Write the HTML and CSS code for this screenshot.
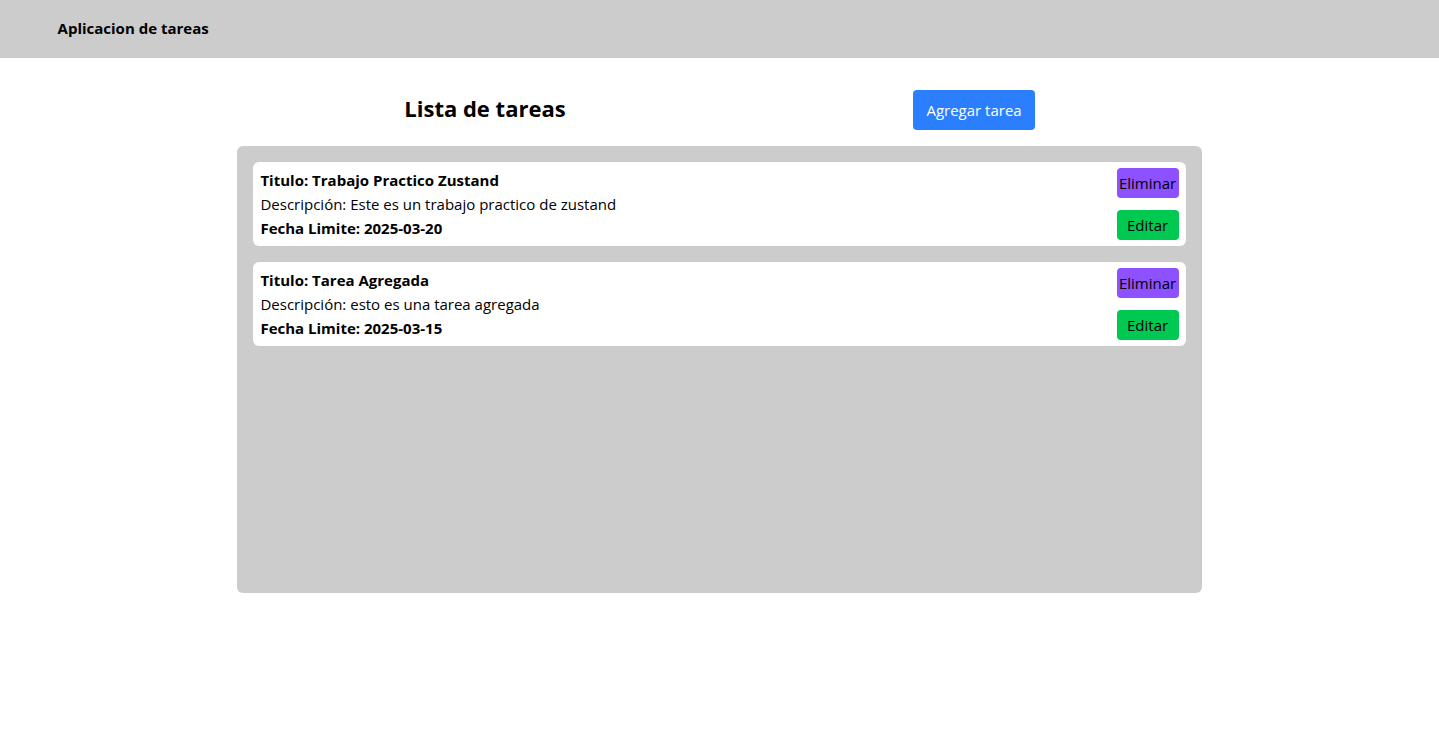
FILE: index.html
```html
<!DOCTYPE html>
<html lang="es">
<head>
<meta charset="utf-8">
<meta name="viewport" content="width=device-width, initial-scale=1">
<title>Aplicacion de tareas</title>
<link rel="stylesheet" href="styles.css">
</head>
<body>
<header class="topbar"><p class="brand">Aplicacion de tareas</p></header>
<main class="page">
  <div class="toolbar">
    <h1 class="title">Lista de tareas</h1>
    <button class="btn-add" type="button">Agregar tarea</button>
  </div>
  <ul class="board">
    <li class="task">
      <div class="info">
        <h2 class="strong">Titulo: Trabajo Practico Zustand</h2>
        <p>Descripción: Este es un trabajo practico de zustand</p>
        <p class="strong">Fecha Limite: 2025-03-20</p>
      </div>
      <div class="actions">
        <button class="btn btn-delete" type="button">Eliminar</button>
        <button class="btn btn-edit" type="button">Editar</button>
      </div>
    </li>
    <li class="task">
      <div class="info">
        <h2 class="strong">Titulo: Tarea Agregada</h2>
        <p>Descripción: esto es una tarea agregada</p>
        <p class="strong">Fecha Limite: 2025-03-15</p>
      </div>
      <div class="actions">
        <button class="btn btn-delete" type="button">Eliminar</button>
        <button class="btn btn-edit" type="button">Editar</button>
      </div>
    </li>
  </ul>
</main>
</body>
</html>
```
FILE: styles.css
```css
* {
  box-sizing: border-box;
  margin: 0;
  padding: 0;
}
body {
  font-family: "Segoe UI", "Open Sans", "Noto Sans", sans-serif;
  font-size: 15px;
  line-height: 24px;
  color: #000;
  background: #fff;
}
button {
  font: inherit;
  border: 0;
  border-radius: 4px;
  cursor: pointer;
}
.topbar {
  padding: 16px 4% 18px;
  background: #ccc;
}
.brand,
.strong {
  font-size: 15px;
  font-weight: 700;
}
.page {
  width: 67%;
  margin: 32px auto 0;
}
.toolbar {
  display: flex;
  justify-content: space-around;
  align-items: flex-start;
  gap: 14px;
  margin-bottom: 16px;
}
.title {
  font-size: 22px;
  line-height: 36px;
  font-weight: 700;
}
.btn-add {
  padding: 8px 13px;
  color: #fff;
  background: #2b7fff;
}
.board {
  display: flex;
  flex-direction: column;
  gap: 16px;
  min-height: 447px;
  padding: 16px;
  list-style: none;
  background: #ccc;
  border-radius: 6px;
}
.task {
  display: flex;
  justify-content: space-between;
  padding: 6px 7px;
  background: #fff;
  border-radius: 6px;
}
.actions {
  display: flex;
  flex-direction: column;
  gap: 12px;
}
.btn {
  width: 62px;
  height: 30px;
}
.btn-delete {
  background: #8e51ff;
}
.btn-edit {
  background: #00c951;
}
```
